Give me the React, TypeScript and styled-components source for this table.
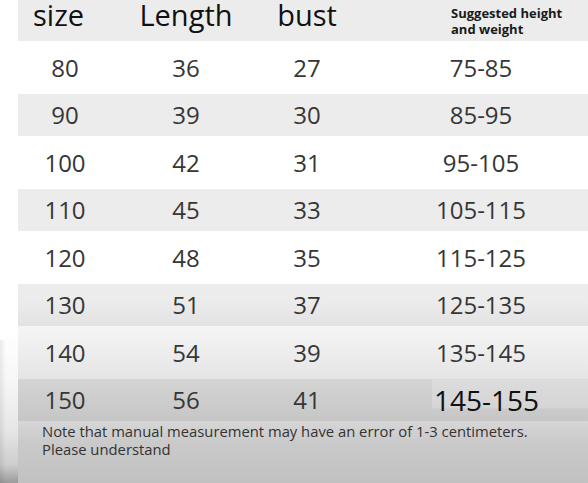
import React from "react";
import styled, { createGlobalStyle } from "styled-components";

const Global = createGlobalStyle`
  html, body { margin: 0; padding: 0; }
  body { font-family: "Open Sans", "Noto Sans", sans-serif; background: #fff; }
`;

const Page = styled.div`
  display: flex;
  width: 588px;
  height: 483px;
  overflow: hidden;
  background: linear-gradient(
    to bottom,
    #ffffff 0,
    #ffffff 300px,
    #f3f3f3 332px,
    #e7e7e7 372px,
    #d8d8d8 418px,
    #cacaca 442px,
    #c1c1c1 483px
  );
`;

const Gutter = styled.div`
  width: 18px;
  flex: 0 0 18px;
  background:
    linear-gradient(to right, rgba(0, 0, 0, 0.08), rgba(0, 0, 0, 0) 6px) 0 340px / 100% 143px no-repeat,
    linear-gradient(
      to bottom,
      #ffffff 0,
      #ffffff 330px,
      #f7f7f7 380px,
      #e6e6e6 430px,
      #cdcdcd 465px,
      #9a9a9a 483px
    );
`;

const Main = styled.div`
  flex: 1;
  display: flex;
  flex-direction: column;
`;

const Table = styled.div`
  display: grid;
  grid-template-columns: 94px 148px 94px 1fr;
`;

const Row = styled.div<{ $shade: boolean; $height: number }>`
  display: contents;
  & > * {
    height: ${(p) => p.$height}px;
    background-color: ${(p) => (p.$shade ? "rgba(0, 0, 0, 0.075)" : "transparent")};
  }
`;

const HeadCell = styled.div<{ $align: "left" | "center"; $pad?: number }>`
  display: flex;
  align-items: flex-start;
  justify-content: ${(p) => (p.$align === "left" ? "flex-start" : "center")};
  padding-left: ${(p) => p.$pad ?? 0}px;
  padding-top: 1px;
  box-sizing: border-box;
  font-size: 29px;
  line-height: 28px;
  color: #111;
  font-weight: 400;
`;

const HintCell = styled.div`
  box-sizing: border-box;
  padding-left: 97px;
  padding-top: 5px;
  font-size: 13px;
  line-height: 16px;
  font-weight: 700;
  color: #1a1a1a;
`;

const Cell = styled.div<{ $pad?: number }>`
  display: flex;
  align-items: center;
  justify-content: center;
  padding-left: ${(p) => p.$pad ?? 0}px;
  box-sizing: border-box;
  font-size: 24px;
  line-height: 24px;
  color: #363636;
`;

const RangeCell = styled(Cell)<{ $patched?: boolean }>`
  padding-left: ${(p) => (p.$patched ? 31 : 20)}px;
  ${(p) =>
    p.$patched
      ? `
    font-size: 28px;
    color: #111;
    background-image: linear-gradient(
      to bottom,
      rgba(255, 255, 255, 0) 0,
      rgba(255, 255, 255, 0.2) 1px,
      rgba(255, 255, 255, 0.2) 29px,
      rgba(255, 255, 255, 0) 30px
    );
    background-size: calc(100% - 78px) 100%;
    background-position: 78px 0;
    background-repeat: no-repeat;
  `
      : ""}
`;

const Note = styled.p`
  margin: 0;
  padding: 1px 0 0 24px;
  font-size: 14.8px;
  line-height: 18px;
  color: #333;
`;

type Item = { size: number; length: number; bust: number; range: string };

const rows: Item[] = [
  { size: 80, length: 36, bust: 27, range: "75-85" },
  { size: 90, length: 39, bust: 30, range: "85-95" },
  { size: 100, length: 42, bust: 31, range: "95-105" },
  { size: 110, length: 45, bust: 33, range: "105-115" },
  { size: 120, length: 48, bust: 35, range: "115-125" },
  { size: 130, length: 51, bust: 37, range: "125-135" },
  { size: 140, length: 54, bust: 39, range: "135-145" },
  { size: 150, length: 56, bust: 41, range: "145-155" },
];

export default function App() {
  return (
    <>
      <Global />
      <Page>
        <Gutter />
        <Main>
          <Table>
            <Row $shade $height={41}>
              <HeadCell $align="left" $pad={15}>size</HeadCell>
              <HeadCell $align="center">Length</HeadCell>
              <HeadCell $align="center">bust</HeadCell>
              <HintCell>
                Suggested height
                <br />
                and weight
              </HintCell>
            </Row>
            {rows.map((r, i) => (
              <Row key={r.size} $shade={i % 2 === 1} $height={i % 2 === 1 ? 42 : 53}>
                <Cell>{r.size}</Cell>
                <Cell>{r.length}</Cell>
                <Cell>{r.bust}</Cell>
                <RangeCell $patched={i === rows.length - 1}>{r.range}</RangeCell>
              </Row>
            ))}
          </Table>
          <Note>
            Note that manual measurement may have an error of 1-3 centimeters.
            <br />
            Please understand
          </Note>
        </Main>
      </Page>
    </>
  );
}
